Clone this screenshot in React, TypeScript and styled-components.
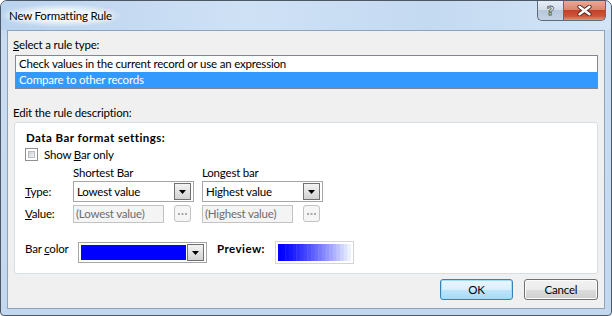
import * as React from 'react'
import styled, { createGlobalStyle, css } from 'styled-components'

const GlobalStyle = createGlobalStyle`
  html, body {
    margin: 0;
    padding: 0;
    background: #ffffff;
  }
  body {
    font-family: "Segoe UI", Lato, "Noto Sans", sans-serif;
    font-size: 11.5px;
    letter-spacing: -0.2px;
    color: #000;
  }
`

const Window = styled.div`
  box-sizing: border-box;
  width: 612px;
  height: 316px;
  display: flex;
  flex-direction: column;
  border: 1px solid #4d5866;
  border-radius: 7px 7px 4px 4px;
  background: linear-gradient(180deg, #bcd4ee 0%, #c9dcf2 12%, #c3d8ef 100%);
  overflow: hidden;
`

const TitleBar = styled.div`
  height: 29px;
  flex: none;
  display: flex;
  justify-content: space-between;
  align-items: flex-start;
  background: linear-gradient(90deg, #bad3ee 0%, #cfe1f5 40%, #c4daf1 70%, #d3e4f6 100%);
`

const Title = styled.div`
  margin: 3px 0 0 0;
  padding: 4px 10px 4px 8px;
  line-height: 15px;
  color: #000;
  background: radial-gradient(ellipse at center, rgba(255, 255, 255, 0.75) 35%, rgba(255, 255, 255, 0) 72%);
  text-shadow: 0 0 5px #ffffff, 0 0 8px #ffffff;
`

const Controls = styled.div`
  display: flex;
  margin-right: 5px;
`

const CaptionButton = styled.div<{ $close?: boolean }>`
  box-sizing: border-box;
  height: 20px;
  width: ${p => (p.$close ? '43px' : '26px')};
  display: flex;
  align-items: center;
  justify-content: center;
  border: 1px solid #5e6b7b;
  border-top: none;
  ${p =>
    p.$close
      ? css`
          border-radius: 0 0 5px 0;
          background: linear-gradient(180deg, #eaa897 0%, #dc8671 45%, #c4402a 50%, #cc553b 80%, #e29580 100%);
        `
      : css`
          border-right: none;
          border-radius: 0 0 0 5px;
          background: linear-gradient(180deg, #e5ecf5 0%, #d3deeb 45%, #b8c8dc 50%, #c3d2e4 100%);
        `}
`

const HelpGlyph = styled.span`
  font-family: "DejaVu Sans", sans-serif;
  font-weight: bold;
  font-size: 13px;
  line-height: 13px;
  letter-spacing: 0;
  color: #f4f7fb;
  -webkit-text-stroke: 0.8px #4c5a6c;
`

const Client = styled.div`
  flex: 1;
  margin: 0 6px 6px 6px;
  border: 1px solid #8ea3bb;
  background: #f0f0f0;
  display: flex;
  flex-direction: column;
  padding: 0 6px 0 5px;
`

const SectionLabel = styled.div<{ $top: number }>`
  margin-top: ${p => p.$top}px;
  line-height: 15px;
`

const ListBox = styled.div`
  margin: 3px 0 0 2px;
  border: 1px solid #828790;
  background: #fff;
  display: flex;
  flex-direction: column;
`

const ListRow = styled.div<{ $selected?: boolean }>`
  height: 16px;
  line-height: 16px;
  padding-left: 3px;
  background: ${p => (p.$selected ? '#3399ff' : 'transparent')};
  color: ${p => (p.$selected ? '#fff' : '#000')};
`

const Panel = styled.div`
  box-sizing: border-box;
  margin: 2px 0 0 1px;
  height: 152px;
  border: 1px solid #d5dfe5;
  border-radius: 3px;
  background: #fff;
  padding: 7px 0 0 10px;
  display: flex;
  flex-direction: column;
`

const Bold = styled.span`
  font-weight: bold;
  letter-spacing: 0.45px;
`

const Heading = styled.div`
  line-height: 15px;
  padding-left: 1px;
`

const CheckRow = styled.label`
  margin-top: 2px;
  display: flex;
  align-items: center;
  gap: 6px;
  height: 15px;
`

const CheckBox = styled.span`
  box-sizing: border-box;
  width: 13px;
  height: 13px;
  border: 1px solid #8e8f8f;
  background: #fff;
  padding: 2px;
  &::after {
    content: '';
    display: block;
    width: 100%;
    height: 100%;
    background: linear-gradient(135deg, #cbcfd5 0%, #f6f6f6 100%);
    border: 1px solid #b8bec6;
    box-sizing: border-box;
  }
`

const Grid = styled.div`
  margin-top: 3px;
  display: grid;
  grid-template-columns: 48px 129px 121px;
  grid-template-rows: 15px 21px 18px;
  row-gap: 1px;
  align-items: center;
  & > :nth-child(n + 7) {
    margin-top: 3px;
  }
`

const Cell = styled.div`
  line-height: 15px;
`

const Combo = styled.div<{ $width: number }>`
  box-sizing: border-box;
  width: ${p => p.$width}px;
  height: 21px;
  border: 1px solid #a6a6a6;
  background: #fff;
  display: flex;
  align-items: center;
  padding: 0 2px 0 2px;
`

const ComboText = styled.span`
  flex: 1;
  padding-left: 1px;
  white-space: nowrap;
`

const Swatch = styled.span`
  flex: 1;
  align-self: stretch;
  margin: 2px 0 2px 0;
  background: #0000ff;
`

const DropButton = styled.span`
  box-sizing: border-box;
  width: 17px;
  height: 17px;
  border: 1px solid #707070;
  background: linear-gradient(180deg, #f3f3f3 0%, #e2e2e2 50%, #d2d2d2 100%);
  display: flex;
  align-items: center;
  justify-content: center;
  margin-left: 1px;
`

const ValueRow = styled.div`
  display: flex;
  align-items: center;
  gap: 10px;
`

const DisabledBox = styled.div`
  box-sizing: border-box;
  width: 91px;
  height: 18px;
  border: 1px solid #c3c3c3;
  background: #f4f4f4;
  color: #6d6d6d;
  line-height: 16px;
  padding-left: 2px;
  white-space: nowrap;
`

const EllipsisButton = styled.div`
  box-sizing: border-box;
  width: 17px;
  height: 17px;
  border: 1px solid #c2c2c2;
  border-radius: 3px;
  background: #f5f5f5;
  display: flex;
  align-items: center;
  justify-content: center;
`

const ColorRow = styled.div`
  margin-top: 20px;
  display: flex;
  align-items: center;
`

const ColorLabel = styled.span`
  width: 53px;
  line-height: 15px;
  align-self: flex-start;
  margin-top: 0px;
`

const PreviewLabel = styled(Bold)`
  margin: 0 10px 0 10px;
  width: 48px;
  align-self: flex-start;
  line-height: 15px;
`

const PreviewBox = styled.div`
  box-sizing: border-box;
  width: 79px;
  height: 23px;
  border: 1px solid #d4d4d4;
  padding: 2px;
  background: #fff;
  display: flex;
`

const Footer = styled.div`
  margin-top: 5px;
  display: flex;
  justify-content: flex-end;
  gap: 11px;
`

const PushButton = styled.div<{ $default?: boolean; $width: number }>`
  box-sizing: border-box;
  width: ${p => p.$width}px;
  height: 21px;
  border-radius: 3px;
  display: flex;
  align-items: center;
  justify-content: center;
  ${p =>
    p.$default
      ? css`
          border: 1px solid #3c7fb1;
          box-shadow: inset 0 0 0 1px #9fdcf5;
          background: linear-gradient(180deg, #eaf6fd 0%, #d9f0fc 50%, #bee6fd 51%, #a7d9f5 100%);
        `
      : css`
          border: 1px solid #707070;
          box-shadow: inset 0 0 0 1px #fbfbfb;
          background: linear-gradient(180deg, #f2f2f2 0%, #ebebeb 50%, #dddddd 51%, #cfcfcf 100%);
        `}
`

const Arrow = () => (
  <svg width="7" height="4" viewBox="0 0 7 4">
    <path d="M0 0 H7 L3.5 4 Z" fill="#000" />
  </svg>
)

const Dots = () => (
  <svg width="9" height="2" viewBox="0 0 9 2">
    <rect x="0" y="0" width="2" height="2" fill="#a9a9a9" />
    <rect x="3.5" y="0" width="2" height="2" fill="#a9a9a9" />
    <rect x="7" y="0" width="2" height="2" fill="#a9a9a9" />
  </svg>
)

const CloseGlyph = () => (
  <svg width="15" height="11" viewBox="0 0 15 11">
    <path d="M2.5 1.8 L12.5 9.2 M12.5 1.8 L2.5 9.2" stroke="#4e2620" strokeWidth="4.2" strokeLinecap="round" />
    <path d="M2.5 1.8 L12.5 9.2 M12.5 1.8 L2.5 9.2" stroke="#ffffff" strokeWidth="2.5" strokeLinecap="round" />
  </svg>
)

const PreviewBar = () => {
  const steps = 20
  const cells = Array.from({ length: steps }, (_, i) => {
    const t = Math.pow(i / (steps - 1), 1.25)
    const r = Math.round(t * 236)
    const g = Math.round(t * 242)
    const b = 255 - Math.round(t * 3)
    return `rgb(${r},${g},${b})`
  })
  return (
    <svg width="73" height="17" viewBox="0 0 73 17" preserveAspectRatio="none">
      {cells.map((c, i) => (
        <rect key={i} x={(i * 73) / steps} y={0} width={73 / steps + 0.5} height={17} fill={c} />
      ))}
    </svg>
  )
}

export default function App() {
  return (
    <>
      <GlobalStyle />
      <Window>
        <TitleBar>
          <Title>New Formatting Rule</Title>
          <Controls>
            <CaptionButton>
              <HelpGlyph>?</HelpGlyph>
            </CaptionButton>
            <CaptionButton $close>
              <CloseGlyph />
            </CaptionButton>
          </Controls>
        </TitleBar>
        <Client>
          <SectionLabel $top={6}>
            <u>S</u>elect a rule type:
          </SectionLabel>
          <ListBox>
            <ListRow>Check values in the current record or use an expression</ListRow>
            <ListRow $selected>Compare to other records</ListRow>
          </ListBox>
          <SectionLabel $top={16}>Edit the rule description:</SectionLabel>
          <Panel>
            <Heading>
              <Bold>Data Bar format settings:</Bold>
            </Heading>
            <CheckRow>
              <CheckBox />
              <span>
                Show <u>B</u>ar only
              </span>
            </CheckRow>
            <Grid>
              <Cell />
              <Cell>Shortest Bar</Cell>
              <Cell>Longest bar</Cell>
              <Cell>
                <u>T</u>ype:
              </Cell>
              <Combo $width={121}>
                <ComboText>Lowest value</ComboText>
                <DropButton>
                  <Arrow />
                </DropButton>
              </Combo>
              <Combo $width={121}>
                <ComboText>Highest value</ComboText>
                <DropButton>
                  <Arrow />
                </DropButton>
              </Combo>
              <Cell>
                <u>V</u>alue:
              </Cell>
              <ValueRow>
                <DisabledBox>(Lowest value)</DisabledBox>
                <EllipsisButton>
                  <Dots />
                </EllipsisButton>
              </ValueRow>
              <ValueRow>
                <DisabledBox>(Highest value)</DisabledBox>
                <EllipsisButton>
                  <Dots />
                </EllipsisButton>
              </ValueRow>
            </Grid>
            <ColorRow>
              <ColorLabel>
                Bar <u>c</u>olor
              </ColorLabel>
              <Combo $width={129}>
                <Swatch />
                <DropButton>
                  <Arrow />
                </DropButton>
              </Combo>
              <PreviewLabel>Preview:</PreviewLabel>
              <PreviewBox>
                <PreviewBar />
              </PreviewBox>
            </ColorRow>
          </Panel>
          <Footer>
            <PushButton $default $width={73}>
              OK
            </PushButton>
            <PushButton $width={74}>Cancel</PushButton>
          </Footer>
        </Client>
      </Window>
    </>
  )
}
